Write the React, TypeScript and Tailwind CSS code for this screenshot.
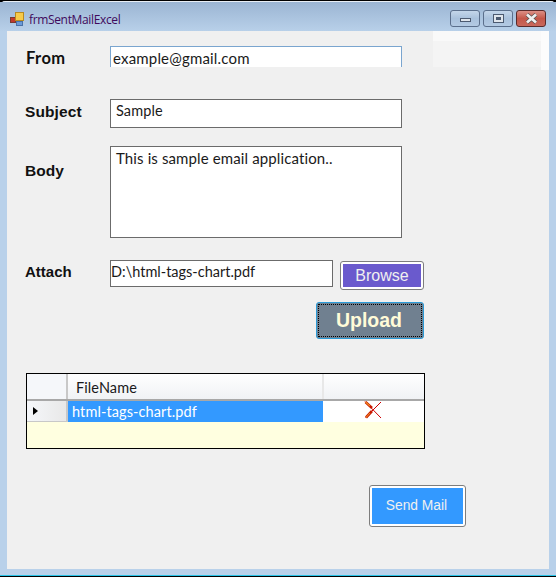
export default function App() {
  return (
    <div className="w-[556px] h-[577px] bg-black flex flex-col overflow-hidden relative font-['Lato',sans-serif]">
      <div className="h-[575px] mt-px border-t border-[#e8eef5] flex flex-col bg-[#b9d1ea] rounded-t-[5px] border-b-0">
        <div className="h-[29px] shrink-0 flex items-center pt-[5px] pl-[10px] pr-[10px] bg-gradient-to-b from-[#9bb5d3] to-[#b8d0e9]">
          <svg width="14" height="14" viewBox="0 0 14 14" className="shrink-0">
            <rect x="0.5" y="5.5" width="5" height="5" fill="#c0392b" stroke="#7a3a30" />
            <rect x="5.5" y="0.5" width="8" height="8" fill="#f6cb4a" stroke="#b88a20" />
            <rect x="6.5" y="9.5" width="6" height="4" fill="#6a9ad8" stroke="#4a72a8" />
          </svg>
          <span className="ml-[5px] mt-px text-[12px] leading-none text-[#3f0a5c] font-['Open_Sans',sans-serif] tracking-[-0.35px]">frmSentMailExcel</span>
          <div className="ml-auto -mt-px flex gap-[3px]">
            <div className="w-[30px] h-[17px] rounded-[3px] border border-[#5b6f8c] bg-gradient-to-b from-[#c4d6ea] via-[#a9c1dc] to-[#b3cae3] flex items-center justify-center">
              <div className="w-[11px] h-[4px] mt-[3px] bg-[#dfe5ec] border border-[#4c5a70]" />
            </div>
            <div className="w-[30px] h-[17px] rounded-[3px] border border-[#5b6f8c] bg-gradient-to-b from-[#c4d6ea] via-[#a9c1dc] to-[#b3cae3] flex items-center justify-center">
              <div className="w-[11px] h-[9px] bg-[#dfe5ec] border border-[#4c5a70] flex items-center justify-center">
                <div className="w-[5px] h-[3px] bg-[#4c5a70]" />
              </div>
            </div>
            <div className="w-[30px] h-[17px] rounded-[3px] border border-[#5a2a2a] bg-gradient-to-b from-[#dc8f86] via-[#c4574a] to-[#c9685c] flex items-center justify-center">
              <svg width="13" height="11" viewBox="0 0 13 11">
                <path d="M2 1.5L11 9.5M11 1.5L2 9.5" stroke="#4c4c4c" strokeWidth="4" />
                <path d="M2 1.5L11 9.5M11 1.5L2 9.5" stroke="#f0f0f0" strokeWidth="2.8" />
              </svg>
            </div>
          </div>
        </div>
        <div className="mx-[7px] h-[538px] bg-[#f0f0f0] relative pl-[19px] shrink-0">
          <div className="absolute left-[426px] top-0 w-[108px] h-[36px] bg-[#f4f4f4]">
            <div className="h-[10px] bg-[#f9f9f9]" />
          </div>
          <div className="absolute left-[534px] top-0 w-[8px] h-[39px] bg-[#fcfcfc]" />

          <div className="flex items-start pt-[15px] h-[68px]">
            <span className="w-[84px] text-[16.5px] leading-[24px] font-bold text-[#111] font-['Lato',sans-serif] tracking-[0.4px]">From</span>
            <div className="w-[292px] h-[21px] bg-white border-t border-x border-[#7aa5cf] text-[15px] leading-[23px] pl-[2px] text-[#1a1a1a] tracking-[0.18px] overflow-hidden">example@gmail.com</div>
          </div>

          <div className="flex items-start">
            <span className="-ml-px w-[85px] text-[15.5px] leading-[26px] font-bold text-[#111] font-['Liberation_Sans',sans-serif] tracking-[0.1px]">Subject</span>
            <div className="w-[292px] h-[29px] bg-white border border-[#6b6b6b] text-[14.5px] leading-[22px] pl-[5px] text-[#1a1a1a] tracking-[0.1px]">Sample</div>
          </div>

          <div className="flex items-start mt-[18px]">
            <span className="-ml-px w-[85px] text-[15.5px] leading-[50px] font-bold text-[#111] font-['Liberation_Sans',sans-serif]">Body</span>
            <div className="w-[292px] h-[92px] bg-white border border-[#6b6b6b] text-[15px] leading-[22px] pl-[5px] text-[#1a1a1a] tracking-[0.12px]">This is sample email application..</div>
          </div>

          <div className="flex items-start mt-[22px]">
            <span className="-ml-px w-[85px] text-[15px] leading-[24px] font-bold text-[#111] font-['Liberation_Sans',sans-serif]">Attach</span>
            <div className="w-[223px] h-[27px] bg-white border border-[#6b6b6b] text-[14.5px] leading-[22px] text-[#1a1a1a]">D:\html-tags-chart.pdf</div>
            <button className="ml-[7px] mt-px w-[84px] h-[29px] rounded-[3px] border border-[#7d7d7d] p-[2px] bg-white">
              <span className="flex w-full h-full items-center justify-center bg-[#6a5acd] text-[#f0f0f0] text-[16px] font-['Liberation_Sans',sans-serif]">Browse</span>
            </button>
          </div>

          <div className="flex justify-end w-[398px] mt-[12px]">
            <button className="w-[108px] h-[37px] rounded-[3px] border border-[#2a9bd8] p-px bg-[#708090]">
              <span className="flex w-full h-full items-center justify-center pr-[2px] border border-dotted border-black text-[#fffbd8] text-[19.5px] font-bold font-['Liberation_Sans',sans-serif]">Upload</span>
            </button>
          </div>

          <div className="mt-[34px] w-[399px] h-[76px] border border-black bg-[#ffffe0] overflow-hidden">
            <div className="flex h-[27px] border-b-2 border-[#a8a8a8] bg-gradient-to-b from-white to-[#f0f2f5]">
              <div className="w-[41px] border-r-2 border-[#c8c8c8] bg-[#f5f7fa]" />
              <div className="w-[256px] border-r-2 border-[#e8e8e8] text-[14.5px] leading-[27px] pl-[8px] text-[#1a1a1a] tracking-[0.1px]">FileName</div>
              <div className="flex-1" />
            </div>
            <div className="flex h-[21px]">
              <div className="w-[41px] border-r-2 border-b border-[#c8c8c8] bg-gradient-to-r from-[#f5f7fa] to-[#e8e8e8] flex items-center pl-[6px]">
                <div className="w-0 h-0 border-y-[4.5px] border-y-transparent border-l-[5px] border-l-black" />
              </div>
              <div className="w-[255px] bg-[#3399ff] text-white text-[14.5px] leading-[22px] pl-[4px] tracking-[0.1px]">html-tags-chart.pdf</div>
              <div className="flex-1 bg-white flex items-start pl-[41px]">
                <svg width="18" height="18" viewBox="0 0 18 18">
                  <path d="M1 0.5L17 17M17 1L1.5 16.5" stroke="#cc0000" strokeWidth="1" fill="none" />
                  <path d="M1.5 1L8 7M8 10L2 16.5" stroke="#c81800" strokeWidth="2.6" fill="none" />
                  <path d="M1.5 1L6 5M6 12L2 16.5" stroke="#f09020" strokeWidth="1.1" fill="none" />
                </svg>
              </div>
            </div>
          </div>

          <div className="flex justify-end w-[440px] mt-[36px]">
            <button className="w-[97px] h-[42px] rounded-[3px] border border-[#7d7d7d] p-[2px] bg-white">
              <span className="flex w-full h-full items-center justify-center pr-[2px] bg-[#3399ff] text-[#f0f0f0] text-[13.8px] font-['Liberation_Sans',sans-serif]">Send Mail</span>
            </button>
          </div>
        </div>
        <div className="flex-1 bg-[#b9d1ea]" />
        <div className="h-px bg-[#29c4e8]" />
      </div>
    </div>
  );
}
